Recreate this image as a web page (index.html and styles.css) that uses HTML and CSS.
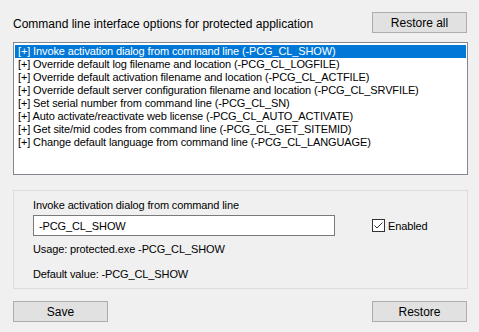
FILE: index.html
```html
<!DOCTYPE html>
<html lang="en">
<head>
    <meta charset="UTF-8">
    <title>Command line options</title>
    <link rel="stylesheet" href="styles.css">
</head>
<body>
    <div class="container">
        <div class="header">
            <span class="title">Command line interface options for protected application</span>
            <button class="btn">Restore all</button>
        </div>

        <div class="listbox">
            <div class="list-item selected">[+] Invoke activation dialog from command line (-PCG_CL_SHOW)</div>
            <div class="list-item">[+] Override default log filename and location (-PCG_CL_LOGFILE)</div>
            <div class="list-item">[+] Override default activation filename and location (-PCG_CL_ACTFILE)</div>
            <div class="list-item">[+] Override default server configuration filename and location (-PCG_CL_SRVFILE)</div>
            <div class="list-item">[+] Set serial number from command line (-PCG_CL_SN)</div>
            <div class="list-item">[+] Auto activate/reactivate web license (-PCG_CL_AUTO_ACTIVATE)</div>
            <div class="list-item">[+] Get site/mid codes from command line (-PCG_CL_GET_SITEMID)</div>
            <div class="list-item">[+] Change default language from command line (-PCG_CL_LANGUAGE)</div>
        </div>

        <div class="panel">
            <div class="panel-main">
                <div class="field-label">Invoke activation dialog from command line</div>
                <input class="text-input" type="text" value="-PCG_CL_SHOW">
                <div class="usage">Usage: protected.exe -PCG_CL_SHOW</div>
                <div class="default">Default value: -PCG_CL_SHOW</div>
            </div>
            <label class="check">
                <span class="check-box">
                    <svg width="11" height="11" viewBox="0 0 11 11">
                        <path d="M1.5 5.5 L4 8 L9.5 2.5" fill="none" stroke="#333" stroke-width="1"/>
                    </svg>
                </span>
                Enabled
            </label>
        </div>

        <div class="footer">
            <button class="btn">Save</button>
            <button class="btn">Restore</button>
        </div>
    </div>
</body>
</html>
```

FILE: styles.css
```css
body {
    margin: 0;
    background-color: #f0f0f0;
    font-family: "Liberation Sans", Arial, sans-serif;
    font-size: 11px;
    letter-spacing: -0.12px;
    color: #000;
}
.container {
    width: 455px;
    margin-left: 13px;
    padding-top: 12px;
}
.header {
    display: flex;
    justify-content: space-between;
    align-items: center;
}
.title {
    margin-top: 2px;
    font-size: 12px;
    letter-spacing: 0;
}
.btn {
    width: 95px;
    height: 21px;
    background-color: #e1e1e1;
    border: 1px solid #adadad;
    font-family: inherit;
    font-size: 12px;
    color: #000;
    padding: 0;
    margin-right: 1px;
}
.listbox {
    margin-top: 9px;
    height: 127px;
    background-color: #fff;
    border: 1px solid #828790;
    padding: 2px 1px;
}
.list-item {
    height: 13px;
    line-height: 13px;
    padding-left: 3px;
    white-space: nowrap;
}
.list-item.selected {
    background-color: #0078d7;
    color: #fff;
}
.panel {
    margin-top: 15px;
    height: 97px;
    border: 1px solid #dcdcdc;
    display: flex;
    padding-left: 19px;
}
.panel-main {
    width: 302px;
    padding-top: 8px;
}
.field-label {
    height: 14px;
}
.text-input {
    display: block;
    box-sizing: border-box;
    width: 302px;
    height: 21px;
    margin-top: 2px;
    border: 1px solid #7a7a7a;
    background-color: #fff;
    font-family: inherit;
    font-size: 11px;
    letter-spacing: -0.12px;
    padding: 0 5px;
    outline: none;
}
.usage {
    margin-top: 7px;
}
.default {
    margin-top: 13px;
}
.check {
    display: flex;
    align-items: center;
    margin-left: 37px;
    margin-top: 28px;
    align-self: flex-start;
}
.check-box {
    width: 11px;
    height: 11px;
    border: 1px solid #333;
    background-color: #fff;
    margin-right: 3px;
    display: flex;
}
.footer {
    display: flex;
    justify-content: space-between;
    margin-top: 12px;
}
```
